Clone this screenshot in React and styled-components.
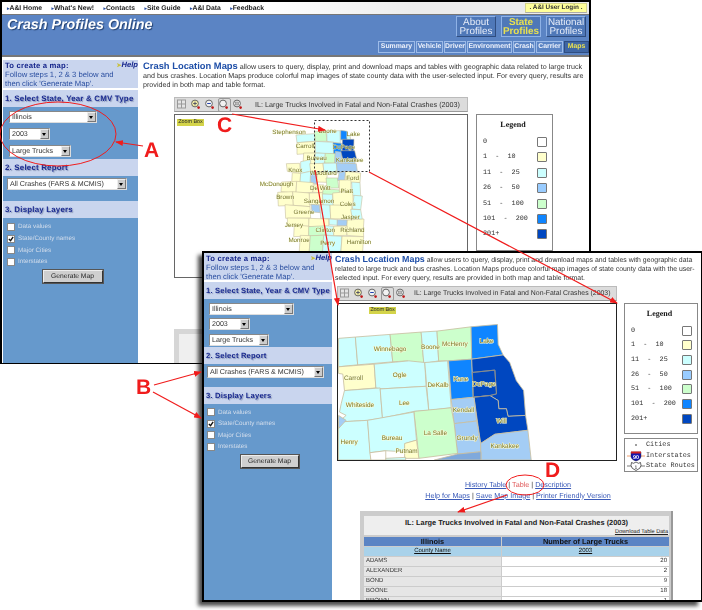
import React from "react";
import styled, { createGlobalStyle } from "styled-components";

const GlobalStyle = createGlobalStyle`
  html, body { margin: 0; padding: 0; background: #fff; }
  body {
    font-family: "Liberation Sans", Arial, sans-serif;
    overflow: hidden;
    text-rendering: geometricPrecision;
  }
`;

const NAV = ["A&I Home", "What's New!", "Contacts", "Site Guide", "A&I Data", "Feedback"];
const TABS = [
  ["Summary", 37],
  ["Vehicle", 27],
  ["Driver", 22],
  ["Environment", 45],
  ["Crash", 22],
  ["Carrier", 27],
  ["Maps", 25, true],
];
const LEGEND = [
  ["0", "#ffffff"],
  ["1  -  10", "#ffffcc"],
  ["11  -  25", "#ccffff"],
  ["26  -  50", "#99ccff"],
  ["51  -  100", "#ccffcc"],
  ["101  -  200", "#0f85ff"],
  ["201+", "#0047c0"],
];
const C = { y: "#ffffcc", c: "#ccffff", l: "#a4cdf5", g: "#ccffcc", b: "#0f85ff", d: "#0047c0", m: "#7fa9dc", w: "#ffffff" };

// counties of the state map, x y w h colour, in reference crop units
const STATE_CELLS = [
  [465, 118, 35, 32, "g"], [500, 116, 40, 34, "c"], [540, 114, 20, 28, "b"], [560, 130, 10, 12, "c"],
  [410, 125, 55, 25, "c"], [410, 150, 55, 35, "y"], [465, 150, 55, 35, "c"], [520, 152, 25, 33, "b"], [545, 142, 35, 43, "d"],
  [430, 185, 35, 30, "y"], [465, 185, 30, 30, "c"], [495, 185, 30, 30, "g"], [525, 178, 20, 37, "l"], [545, 175, 42, 22, "d"], [545, 197, 40, 18, "l"],
  [380, 215, 40, 25, "y"], [420, 205, 30, 35, "c"], [450, 215, 40, 25, "y"], [490, 215, 40, 25, "c"], [530, 215, 60, 25, "l"],
  [395, 240, 25, 30, "y"], [420, 240, 30, 30, "c"], [450, 240, 20, 35, "l"], [470, 240, 30, 30, "y"], [500, 258, 35, 32, "g"], [535, 240, 20, 25, "l"], [555, 240, 45, 30, "y"],
  [365, 270, 45, 30, "y"], [410, 270, 50, 30, "y"], [460, 275, 30, 25, "y"], [490, 290, 50, 18, "g"], [540, 265, 35, 35, "y"], [575, 270, 25, 40, "c"],
  [355, 300, 45, 40, "y"], [400, 300, 50, 40, "y"], [450, 300, 40, 35, "y"], [490, 308, 30, 32, "c"], [520, 300, 60, 40, "y"], [580, 310, 25, 40, "c"],
  [375, 340, 75, 40, "y"], [455, 335, 25, 25, "l"], [480, 340, 30, 40, "c"], [510, 340, 65, 40, "y"], [575, 350, 30, 30, "c"],
  [380, 380, 65, 20, "y"], [445, 380, 60, 22, "y"], [505, 380, 25, 20, "c"], [530, 380, 30, 22, "l"], [560, 380, 50, 30, "y"],
  [400, 400, 45, 30, "y"], [445, 402, 50, 28, "g"], [495, 402, 25, 28, "c"], [520, 402, 40, 28, "y"], [560, 410, 50, 20, "y"],
  [420, 430, 30, 60, "y"], [450, 430, 40, 60, "g"], [490, 430, 55, 60, "c"], [545, 430, 65, 60, "y"],
];
const STATE_LABELS = [
  ["Stephenson", 387, 124], ["Boone", 503, 121], ["Lake", 580, 132], ["Carroll", 435, 166], ["DuPage", 552, 171],
  ["Bureau", 470, 202], ["Kankakee", 569, 210], ["Knox", 406, 240], ["Woodford", 490, 249], ["Ford", 578, 262],
  ["McDonough", 350, 280], ["De Witt", 481, 293], ["Piatt", 560, 302], ["Brown", 375, 319], ["Sangamon", 477, 331],
  ["Coles", 563, 340], ["Greene", 432, 366], ["Jasper", 571, 379], ["Jersey", 402, 404], ["Clinton", 496, 418],
  ["Richland", 577, 418], ["Monroe", 417, 450], ["Perry", 503, 458], ["Hamilton", 597, 454],
];
// zoomed north-east counties, closed polygons in reference crop units
const ZOOM_COUNTIES = [
  ["22,172 73,168 80,252 22,258", "c"], ["73,168 178,160 186,243 80,252", "c"],
  ["178,160 272,153 280,248 235,252 232,240 186,243", "g"], ["272,153 320,150 325,240 280,248", "c"],
  ["320,150 423,137 425,235 355,240 325,240", "g"], ["423,137 503,130 505,190 520,222 425,235", "b"],
  ["355,240 425,235 430,350 363,357", "b"],
  ["425,235 520,222 540,245 560,300 582,330 588,405 535,408 530,385 507,385 505,360 480,345 430,350", "d"],
  ["427,275 495,268 500,340 480,345 430,350", "d"],
  ["432,350 480,345 505,360 507,385 530,385 535,408 588,405 595,450 495,462 452,490", "d"],
  ["363,357 432,350 440,422 372,430", "l"], ["372,430 440,422 452,490 453,515 382,522", "l"],
  ["495,462 595,450 605,540 453,540 452,490", "l"],
  ["22,258 130,250 135,322 40,330 35,280 22,278", "y"],
  ["130,250 235,240 283,245 287,317 148,325 135,322", "c"], ["283,245 352,240 363,382 295,390", "c"],
  ["40,330 148,322 155,413 110,420 22,425 45,405 25,395 30,370", "c"], ["148,325 287,317 295,390 250,393 155,413", "c"],
  ["250,393 363,382 372,430 382,520 265,535 260,480", "g"],
  ["22,425 110,420 120,540 22,540", "c"], ["110,420 250,395 258,480 225,490 222,515 165,512 117,518", "c"],
  ["222,490 258,480 265,535 222,535", "y"], ["117,518 165,512 165,540 120,540", "w"],
  ["165,535 225,532 225,540 165,540", "c"], ["312,540 382,522 453,515 453,540", "m"], ["22,405 45,420 22,445", "l"],
];
const ZOOM_LABELS = [
  ["Winnebago", 178, 211], ["Boone", 300, 203], ["McHenry", 374, 196], ["Lake", 470, 185], ["Carroll", 67, 297],
  ["Ogle", 207, 290], ["DeKalb", 323, 320], ["Kane", 392, 300], ["DuPage", 462, 315], ["Whiteside", 87, 380],
  ["Lee", 221, 374], ["Kendall", 400, 395], ["Will", 515, 428], ["Grundy", 411, 478], ["La Salle", 315, 465],
  ["Henry", 54, 491], ["Bureau", 184, 479], ["Putnam", 228, 519], ["Kankakee", 525, 504],
];
const ROWS = [["ADAMS", 20], ["ALEXANDER", 2], ["BOND", 9], ["BOONE", 18], ["BROWN", 1]];

// nudges a corner a little so the state's counties are not a perfect grid
const nudge = (x, y) => `${x + ((x * 7 + y * 13) % 7) - 3},${y + ((x * 11 + y * 3) % 7) - 3}`;

const Page = styled.div`
  position: relative;
  width: 702px;
  height: 610px;
  overflow: hidden;
  background: #fff;
`;
const BackWindow = styled.div`
  position: absolute;
  left: 0;
  top: 0;
  width: 591px;
  height: 364px;
  box-sizing: border-box;
  border: 2px solid #000;
  border-bottom-width: 1px;
  background: #fff;
  display: flex;
  flex-direction: column;
  overflow: hidden;
  filter: blur(0.25px);
`;
const FrontWindow = styled.div`
  position: absolute;
  left: 202px;
  top: 251px;
  width: 500px;
  height: 351px;
  box-sizing: border-box;
  border: 1px solid #000;
  border-width: 2px 1px 2px 2px;
  background: #fff;
  display: flex;
  box-shadow: -4px 4px 4px rgba(0, 0, 0, 0.7);
`;
const FrontInner = styled.div`
  flex: 1;
  display: flex;
  min-width: 0;
  overflow: hidden;
  filter: blur(0.25px);
`;
const NavBar = styled.div`
  height: 12px;
  flex: none;
  display: flex;
  align-items: center;
  justify-content: space-between;
  padding-left: 5px;
  background: linear-gradient(to right, #fff 45%, #ececec 70%);
`;
const NavList = styled.div`
  display: flex;
  gap: 9.4px;
`;
const NavLink = styled.span`
  font-size: 6.8px;
  font-weight: bold;
  color: #222;
  white-space: nowrap;
  &::before {
    content: "▸";
    font-size: 5px;
    color: #2b4fa0;
  }
`;
const LoginTab = styled.div`
  width: 62px;
  height: 10px;
  margin-right: 2px;
  background: #ffff99;
  border: 1px solid #d4d48a;
  border-bottom-color: #aaa;
  box-sizing: border-box;
  font-size: 6.4px;
  font-weight: bold;
  line-height: 8px;
  text-align: center;
  color: #333;
`;
const Banner = styled.div`
  height: 43px;
  flex: none;
  background: #5b84c4;
  border-bottom: 2px solid #777;
  display: flex;
  justify-content: space-between;
  padding-left: 5px;
  box-sizing: border-box;
  border-top: 1px solid #777;
`;
const SiteTitle = styled.div`
  font-size: 14.3px;
  font-weight: bold;
  font-style: italic;
  color: #fff;
  margin-top: 2px;
  text-shadow: 1px 1px 1px #24406e;
`;
const BannerRight = styled.div`
  display: flex;
  flex-direction: column;
  align-items: flex-end;
`;
const BigTabs = styled.div`
  display: flex;
  gap: 5px;
  margin: 1px 3px 0 0;
`;
const BigTab = styled.div`
  width: 40px;
  height: 21px;
  box-sizing: border-box;
  border: 1px solid ${(p) => (p.$active ? "#8fb2e6" : "#2f4d80")};
  border-top-color: #8fb2e6;
  border-left-color: #8fb2e6;
  background: #4f78b8;
  color: ${(p) => (p.$active ? "#e8e050" : "#e6ecf8")};
  font-size: 9.9px;
  font-weight: ${(p) => (p.$active ? "bold" : "normal")};
  line-height: 9.5px;
  padding-top: 0.5px;
  text-align: center;
`;
const SmallTabs = styled.div`
  display: flex;
  gap: 1px;
  margin-top: 4px;
  align-items: flex-start;
`;
const SmallTab = styled.div`
  width: ${(p) => p.$width}px;
  height: 12px;
  box-sizing: border-box;
  border: 1px solid ${(p) => (p.$active ? "#2f4d80" : "#9dbbe8")};
  background: ${(p) => (p.$active ? "#3f66a4" : "#5b84c4")};
  color: ${(p) => (p.$active ? "#e8e050" : "#eef2fb")};
  font-size: 6.9px;
  font-weight: bold;
  line-height: 10px;
  text-align: center;
  white-space: nowrap;
`;
const Body = styled.div`
  flex: 1;
  display: flex;
  min-height: 0;
`;
const Side = styled.div`
  flex: none;
  width: ${(p) => p.$width}px;
  margin-left: ${(p) => p.$inset}px;
  display: flex;
  flex-direction: column;
`;
const Intro = styled.div`
  flex: none;
  height: ${(p) => p.$height}px;
  margin: ${(p) => p.$top}px 0 2px;
  background: #c9d5ee;
  padding: 1px 0 0 2px;
  box-sizing: border-box;
  position: relative;
  font-size: 7.7px;
  line-height: 9.2px;
  color: #2b4fa0;
`;
const IntroHead = styled.div`
  font-weight: bold;
  color: #16268c;
  letter-spacing: 0.2px;
`;
const HelpLink = styled.span`
  position: absolute;
  right: 0;
  top: 0;
  font-size: 7.6px;
  font-style: italic;
  font-weight: bold;
  color: #16268c;
  &::before {
    content: "➤";
    font-style: normal;
    font-size: 6px;
    color: #c8c040;
  }
`;
const StepHead = styled.div`
  flex: none;
  height: 17px;
  background: #c9d5ee;
  font-size: ${(p) => p.$size}px;
  font-weight: bold;
  letter-spacing: 0.2px;
  line-height: 17px;
  color: #1a2a90;
  padding-left: 2px;
  text-shadow: 1px 1px 1px #8a97b8;
  white-space: nowrap;
`;
const Panel = styled.div`
  flex: ${(p) => (p.$height ? "none" : "1")};
  height: ${(p) => (p.$height ? `${p.$height}px` : "auto")};
  box-sizing: border-box;
  background: #6699cc;
  padding: ${(p) => p.$padding};
  display: flex;
  flex-direction: column;
  align-items: flex-start;
  gap: ${(p) => p.$gap || 0}px;
`;
const SelectBox = styled.div`
  width: ${(p) => p.$width}px;
  height: 12px;
  flex: none;
  box-sizing: border-box;
  background: #fff;
  border: 1px solid #888;
  border-right-color: #ddd;
  border-bottom-color: #ddd;
  display: flex;
  justify-content: space-between;
  align-items: center;
  padding-left: 2px;
  font-size: 7.1px;
  color: #333;
  white-space: nowrap;
`;
const SelectArrow = styled.span`
  width: 9px;
  height: 10px;
  flex: none;
  background: #ccc;
  border: 1px solid #777;
  border-top-color: #eee;
  border-left-color: #eee;
  box-sizing: border-box;
  position: relative;
  &::after {
    content: "";
    position: absolute;
    left: 1px;
    top: 3px;
    border: 2.5px solid transparent;
    border-top: 3px solid #000;
    border-bottom: 0;
  }
`;
const CheckRow = styled.div`
  height: ${(p) => p.$height}px;
  display: flex;
  align-items: center;
  gap: 3px;
  font-size: 6.3px;
  color: #d4deec;
  white-space: nowrap;
`;
const CheckMark = styled.span`
  width: 8px;
  height: 8px;
  box-sizing: border-box;
  flex: none;
  background: #fff;
  border: 1px solid #888;
  display: flex;
`;
const GenerateButton = styled.div`
  width: ${(p) => p.$width}px;
  height: 13px;
  align-self: center;
  margin-top: 2px;
  box-sizing: border-box;
  background: #cfcfcf;
  border: 1px solid #333;
  border-top-color: #eee;
  border-left-color: #eee;
  outline: 1px solid #555;
  font-size: 6.7px;
  line-height: 11px;
  text-align: center;
  color: #222;
`;
const Main = styled.div`
  flex: 1;
  min-width: 0;
  padding: ${(p) => p.$padding};
  display: flex;
  flex-direction: column;
`;
const Lede = styled.p`
  margin: 0;
  font-size: ${(p) => p.$size}px;
  line-height: 9.1px;
  color: #333;
  white-space: pre;
`;
const LedeTitle = styled.b`
  font-size: ${(p) => p.$size}px;
  color: #1f4fa8;
  font-weight: bold;
`;
const MapBlock = styled.div`
  display: flex;
  align-items: flex-start;
  gap: ${(p) => p.$gap}px;
  margin: ${(p) => p.$top}px 0 0 ${(p) => p.$indent}px;
`;
const MapColumn = styled.div`
  width: ${(p) => p.$width}px;
  flex: none;
`;
const ToolBar = styled.div`
  height: 15px;
  box-sizing: border-box;
  background: #dcdcdc;
  border: 1px solid #bbb;
  border-bottom-color: #999;
  display: flex;
  align-items: center;
  gap: 3px;
  padding-left: 2px;
`;
const ToolCaption = styled.span`
  font-size: ${(p) => p.$size}px;
  color: #333;
  white-space: nowrap;
  margin-left: ${(p) => p.$gap}px;
`;
const ToolSlot = styled.span`
  width: 11px;
  height: 12px;
  display: flex;
  border: 1px solid ${(p) => (p.$pressed ? "#999" : "transparent")};
  border-radius: 2px;
  box-sizing: content-box;
  margin: 0 -1px;
`;
const MapFrame = styled.div`
  position: relative;
  margin-top: 2px;
  height: ${(p) => p.$height}px;
  box-sizing: border-box;
  border: 1px solid ${(p) => (p.$strong ? "#222" : "#666")};
  background: #fff;
  overflow: hidden;
  svg { display: block; }
`;
const ZoomBadge = styled.span`
  position: absolute;
  left: ${(p) => p.$left}px;
  top: ${(p) => p.$top}px;
  width: 27px;
  height: 7px;
  background: #d4d44a;
  font-size: 5.4px;
  line-height: 7px;
  text-align: center;
  color: #222;
`;
const LegendBox = styled.div`
  flex: none;
  box-sizing: border-box;
  width: ${(p) => p.$width}px;
  height: ${(p) => p.$height}px;
  margin-top: ${(p) => p.$top}px;
  border: 1px solid #888;
  padding: 5px 5px 0 6px;
  background: #fff;
`;
const LegendTitle = styled.div`
  font-family: "Liberation Serif", serif;
  font-size: 8px;
  font-weight: bold;
  text-align: center;
  color: #111;
  margin-bottom: 5px;
  padding-right: 4px;
`;
const LegendRow = styled.div`
  height: ${(p) => p.$height}px;
  display: flex;
  justify-content: space-between;
  align-items: center;
  font-family: "Liberation Mono", monospace;
  font-size: 6.8px;
  color: #333;
  white-space: pre;
`;
const Swatch = styled.span`
  width: 10px;
  height: 10px;
  box-sizing: border-box;
  background: ${(p) => p.$color};
  border: 1px solid #777;
  border-radius: 1px;
`;
const LegendStack = styled.div`
  display: flex;
  flex-direction: column;
  gap: 4px;
`;
const KeyBox = styled.div`
  width: 74px;
  height: 34px;
  box-sizing: border-box;
  border: 1px solid #888;
  padding-top: 1px;
  display: flex;
  flex-direction: column;
`;
const KeyRow = styled.div`
  flex: 1;
  display: flex;
  align-items: center;
  font-family: "Liberation Mono", monospace;
  font-size: 6.8px;
  color: #333;
  white-space: nowrap;
`;
const KeyIcon = styled.span`
  width: 21px;
  flex: none;
  display: flex;
  justify-content: center;
`;
const LinkLines = styled.div`
  margin-top: 8px;
  text-align: center;
  font-size: 7.2px;
  line-height: 10.5px;
  color: #333;
  white-space: nowrap;
`;
const PlainLink = styled.span`
  color: ${(p) => (p.$current ? "#e05a5a" : "#3a5ab8")};
  text-decoration: ${(p) => (p.$current ? "none" : "underline")};
`;
const DataTable = styled.div`
  width: 313px;
  margin: 10px 0 0 25px;
  background: #ccc;
  border-right: 2px solid #999;
  padding: 5px 2px 0 4px;
  box-sizing: border-box;
  display: flex;
  flex-direction: column;
  gap: 1px;
`;
const TableTitle = styled.div`
  height: 19px;
  background: #eee;
  font-size: 7.4px;
  font-weight: bold;
  color: #222;
  text-align: center;
  position: relative;
  padding-top: 2px;
  box-sizing: border-box;
  margin-bottom: 1px;
`;
const DownloadLink = styled.span`
  position: absolute;
  right: 1px;
  bottom: 0;
  font-size: 5.6px;
  font-weight: normal;
  text-decoration: underline;
`;
const TableRow = styled.div`
  display: grid;
  grid-template-columns: 137px 1fr;
  gap: 1px;
`;
const TableCell = styled.div`
  height: 9px;
  font-size: ${(p) => (p.$kind === "head" ? 7.4 : 6)}px;
  line-height: 9px;
  padding: 0 2px;
  color: ${(p) => (p.$kind === "body" ? "#333" : "#111")};
  font-weight: ${(p) => (p.$kind === "head" ? "bold" : "normal")};
  text-decoration: ${(p) => (p.$kind === "sub" ? "underline" : "none")};
  text-align: ${(p) => p.$align || "center"};
  background: ${(p) => {
    if (p.$kind === "head") return "#5b84c4";
    if (p.$kind === "sub") return "#a9d2ea";
    return p.$white ? "#fff" : "#e6e6e6";
  }};
`;
const UnderTable = styled.div`
  margin: 51px 0 0 31px;
  height: 40px;
  width: 300px;
  flex: none;
  padding: 5px 0 0 5px;
  background: #d6d6d6;
  box-sizing: border-box;
`;
const UnderTitle = styled.div`
  height: 30px;
  background: #efefef;
`;
const Annotations = styled.svg`
  position: absolute;
  left: 0;
  top: 0;
  pointer-events: none;
`;
const AnnotationLetter = styled.text`
  font-family: "Liberation Sans", Arial, sans-serif;
  font-size: 21px;
  font-weight: bold;
  fill: #f01c1c;
`;

function ToolIcon({ kind }) {
  if (kind === "grid") {
    return (
      <svg width="9" height="10" viewBox="0 0 9 10">
        <rect x="0.5" y="1" width="8" height="8" fill="#e4e4e4" stroke="#999" />
        <path d="M4.5 1v8M.5 5h8" stroke="#999" fill="none" />
      </svg>
    );
  }
  return (
    <svg width="9" height="10" viewBox="0 0 9 10">
      <circle cx="4" cy="4.5" r="3.4" fill={kind === "in" ? "#f4f0a8" : "#f2f2f2"} stroke="#666" />
      {kind === "in" && <path d="M2.2 4.5h3.6M4 2.7v3.6" stroke="#556" />}
      {kind === "out" && <path d="M2.2 4.5h3.6" stroke="#2040b0" />}
      {kind === "pan" && <rect x="2.5" y="3" width="3" height="3" fill="#bbb" stroke="#777" strokeWidth="0.5" />}
      <circle cx="7.6" cy="8.6" r="1.3" fill="#c01818" />
    </svg>
  );
}

function Tools() {
  return (
    <>
      <ToolSlot><ToolIcon kind="grid" /></ToolSlot>
      <ToolSlot><ToolIcon kind="in" /></ToolSlot>
      <ToolSlot><ToolIcon kind="out" /></ToolSlot>
      <ToolSlot $pressed><ToolIcon kind="box" /></ToolSlot>
      <ToolSlot><ToolIcon kind="pan" /></ToolSlot>
    </>
  );
}

function Sidebar({ width, inset, introHeight, introTop, panels, gap, rowHeight, selects, report, button, headSize }) {
  return (
    <Side $width={width} $inset={inset}>
      <Intro $height={introHeight} $top={introTop}>
        <IntroHead>To create a map:</IntroHead>
        <HelpLink>Help</HelpLink>
        Follow steps 1, 2 &amp; 3 below and
        <br />
        then click 'Generate Map'.
      </Intro>
      <StepHead $size={headSize}>1. Select State, Year &amp; CMV Type</StepHead>
      <Panel $height={panels[0]} $padding={`3.5px 0 0 ${inset + 5}px`} $gap={gap}>
        <SelectBox $width={selects[0]}>Illinois<SelectArrow /></SelectBox>
        <SelectBox $width={selects[1]}>2003<SelectArrow /></SelectBox>
        <SelectBox $width={selects[2]}>Large Trucks<SelectArrow /></SelectBox>
      </Panel>
      <StepHead $size={headSize}>2. Select Report</StepHead>
      <Panel $height={panels[1]} $padding={`2px 0 0 ${inset + 3}px`}>
        <SelectBox $width={report}>All Crashes (FARS &amp; MCMIS)<SelectArrow /></SelectBox>
      </Panel>
      <StepHead $size={headSize}>3. Display Layers</StepHead>
      <Panel $padding={`3px 0 0 ${inset + 3}px`}>
        {["Data values", "State/County names", "Major Cities", "Interstates"].map((name, i) => (
          <CheckRow key={name} $height={rowHeight}>
            <CheckMark>
              {i === 1 && (
                <svg width="6" height="6" viewBox="0 0 7 7">
                  <path d="M1 3.5l2 2 3-4.5" fill="none" stroke="#111" strokeWidth="1.6" />
                </svg>
              )}
            </CheckMark>
            {name}
          </CheckRow>
        ))}
        <GenerateButton $width={button}>Generate Map</GenerateButton>
      </Panel>
    </Side>
  );
}

function Legend({ width, height, top, rowHeight }) {
  return (
    <LegendBox $width={width} $height={height} $top={top}>
      <LegendTitle>Legend</LegendTitle>
      {LEGEND.map(([label, color]) => (
        <LegendRow key={label} $height={rowHeight}>
          {label}
          <Swatch $color={color} />
        </LegendRow>
      ))}
    </LegendBox>
  );
}

function StateMap() {
  return (
    <svg width="294" height="164" viewBox="45 68 882 492">
      {STATE_CELLS.map(([x, y, w, h, c], i) => (
        <polygon
          key={i}
          points={[nudge(x, y), nudge(x + w, y), nudge(x + w, y + h), nudge(x, y + h)].join(" ")}
          fill={C[c]}
          stroke="#c8c0a0"
          strokeWidth="1.8"
        />
      ))}
      {STATE_LABELS.map(([name, x, y]) => (
        <text
          key={name}
          x={x}
          y={y}
          textAnchor="middle"
          fontSize="18.8"
          fontFamily="Liberation Sans, Arial, sans-serif"
          fill="#77772a"
          stroke="#fbfbd8"
          strokeWidth="1.4"
          paintOrder="stroke"
        >
          {name}
        </text>
      ))}
    </svg>
  );
}

function RegionMap() {
  return (
    <svg width="278" height="156" viewBox="22 68 838 472">
      {ZOOM_COUNTIES.map(([points, c], i) => (
        <polygon key={i} points={points} fill={C[c]} stroke="#c8bfa0" strokeWidth="2.5" />
      ))}
      <polygon points="427,275 495,268 500,340 480,345 430,350" fill="none" stroke="#7b7b78" strokeWidth="2" />
      {ZOOM_LABELS.map(([name, x, y]) => (
        <text
          key={name}
          x={x}
          y={y}
          textAnchor="middle"
          fontSize="19.5"
          fontFamily="Liberation Sans, Arial, sans-serif"
          fill="#77772a"
          stroke="#fbfbd8"
          strokeWidth="3"
          paintOrder="stroke"
        >
          {name}
        </text>
      ))}
    </svg>
  );
}

function Arrow({ d }) {
  return <path d={d} fill="none" stroke="#f01c1c" strokeWidth="1.2" markerEnd="url(#head)" />;
}

export default function App() {
  return (
    <Page>
      <GlobalStyle />
      <BackWindow>
        <NavBar>
          <NavList>
            {NAV.map((label) => (
              <NavLink key={label}>{label}</NavLink>
            ))}
          </NavList>
          <LoginTab>. A&amp;I User Login .</LoginTab>
        </NavBar>
        <Banner>
          <SiteTitle>Crash Profiles Online</SiteTitle>
          <BannerRight>
            <BigTabs>
              <BigTab>About Profiles</BigTab>
              <BigTab $active>State Profiles</BigTab>
              <BigTab>National Profiles</BigTab>
            </BigTabs>
            <SmallTabs>
              {TABS.map(([label, w, active]) => (
                <SmallTab key={label} $width={w} $active={active}>{label}</SmallTab>
              ))}
            </SmallTabs>
          </BannerRight>
        </Banner>
        <Body>
          <Sidebar
            width={135}
            inset={1}
            introHeight={28}
            introTop={3}
            panels={[52, 25]}
            gap={5}
            rowHeight={11.7}
            selects={[88, 41, 62]}
            report={120}
            button={60}
            headSize={7.9}
          />
          <Main $padding="4px 0 0 5px">
            <Lede $size={7.15}>
              <LedeTitle $size={9.4}>Crash Location Maps</LedeTitle>
              {" allow users to query, display, print and download maps and tables with geographic data related to large truck\n"}
              {"and bus crashes. Location Maps produce colorful map images of state county data with the user-selected input. For every query, results are\n"}
              {"provided in both map and table format."}
            </Lede>
            <MapBlock $top={7} $gap={8} $indent={31}>
              <MapColumn $width={294}>
                <ToolBar>
                  <Tools />
                  <ToolCaption $gap={8} $size={7.2}>IL: Large Trucks Involved in Fatal and Non-Fatal Crashes (2003)</ToolCaption>
                </ToolBar>
                <MapFrame $height={164}>
                  <StateMap />
                  <ZoomBadge $left={2} $top={4}>Zoom Box</ZoomBadge>
                </MapFrame>
              </MapColumn>
              <Legend width={77} height={137} top={17} rowHeight={15.4} />
            </MapBlock>
            <UnderTable>
              <UnderTitle />
            </UnderTable>
          </Main>
        </Body>
      </BackWindow>

      <FrontWindow>
        <FrontInner>
          <Sidebar
            width={128}
            inset={0}
            introHeight={27}
            introTop={0}
            panels={[48, 22.5]}
            gap={3.5}
            rowHeight={11.5}
            selects={[85, 41, 60]}
            report={117}
            button={58}
            headSize={7.6}
          />
          <Main $padding="2px 0 0 3px">
            <Lede $size={6.9}>
              <LedeTitle $size={8.9}>Crash Location Maps</LedeTitle>
              {" allow users to query, display, print and download maps and tables with geographic data\n"}
              {"related to large truck and bus crashes. Location Maps produce colorful map images of state county data with the user-\n"}
              {"selected input. For every query, results are provided in both map and table format."}
            </Lede>
            <MapBlock $top={3} $gap={7} $indent={2}>
              <MapColumn $width={280}>
                <ToolBar>
                  <Tools />
                  <ToolCaption $gap={4} $size={6.9}>IL: Large Trucks Involved in Fatal and Non-Fatal Crashes (2003)</ToolCaption>
                </ToolBar>
                <MapFrame $height={158} $strong>
                  <RegionMap />
                  <ZoomBadge $left={31} $top={3}>Zoom Box</ZoomBadge>
                </MapFrame>
              </MapColumn>
              <LegendStack>
                <Legend width={74} height={131} top={17} rowHeight={14.7} />
                <KeyBox>
                  <KeyRow>
                    <KeyIcon><svg width="12" height="6"><circle cx="6" cy="3" r="0.8" fill="#222" /></svg></KeyIcon>
                    Cities
                  </KeyRow>
                  <KeyRow>
                    <KeyIcon>
                      <svg width="18" height="10" viewBox="0 0 18 10">
                        <path d="M0 5h18" stroke="#f0a070" />
                        <path d="M4 1h10v5q-1 3-5 4q-4-1-5-4z" fill="#1414b0" stroke="#222" strokeWidth="0.4" />
                        <rect x="4" y="0.5" width="10" height="2" fill="#d02020" />
                        <text x="9" y="8" textAnchor="middle" fontSize="5.5" fontWeight="bold" fill="#fff" fontFamily="Liberation Sans, sans-serif">90</text>
                      </svg>
                    </KeyIcon>
                    Interstates
                  </KeyRow>
                  <KeyRow>
                    <KeyIcon>
                      <svg width="18" height="10" viewBox="0 0 18 10">
                        <path d="M0 5h18" stroke="#222" strokeWidth="0.6" />
                        <path d="M4.5 1.5l2 .8 2.5-1.3 2.5 1.3 2-.8.5 3q0 3-5 5q-5-2-5-5z" fill="#fff" stroke="#222" strokeWidth="0.7" />
                        <text x="9" y="7.5" textAnchor="middle" fontSize="5" fill="#111" fontFamily="Liberation Sans, sans-serif">1</text>
                      </svg>
                    </KeyIcon>
                    State Routes
                  </KeyRow>
                </KeyBox>
              </LegendStack>
            </MapBlock>
            <LinkLines>
              <PlainLink>History Table</PlainLink> | <PlainLink $current>Table</PlainLink> | <PlainLink>Description</PlainLink>
              <br />
              <PlainLink>Help for Maps</PlainLink> | <PlainLink>Save Map Image</PlainLink> | <PlainLink>Printer Friendly Version</PlainLink>
            </LinkLines>
            <DataTable>
              <TableTitle>
                IL: Large Trucks Involved in Fatal and Non-Fatal Crashes (2003)
                <DownloadLink>Download Table Data</DownloadLink>
              </TableTitle>
              <TableRow>
                <TableCell $kind="head">Illinois</TableCell>
                <TableCell $kind="head">Number of Large Trucks</TableCell>
              </TableRow>
              <TableRow>
                <TableCell $kind="sub">County Name</TableCell>
                <TableCell $kind="sub">2003</TableCell>
              </TableRow>
              {ROWS.map(([county, count]) => (
                <TableRow key={county}>
                  <TableCell $kind="body" $align="left">{county}</TableCell>
                  <TableCell $kind="body" $align="right" $white>{count}</TableCell>
                </TableRow>
              ))}
            </DataTable>
          </Main>
        </FrontInner>
      </FrontWindow>

      <Annotations width="702" height="610" viewBox="0 0 702 610">
        <defs>
          <marker id="head" markerWidth="8" markerHeight="6" refX="7" refY="3" orient="auto" markerUnits="userSpaceOnUse">
            <path d="M0 0L8 3L0 6z" fill="#f01c1c" />
          </marker>
        </defs>
        <ellipse cx="58" cy="134" rx="58" ry="32" fill="none" stroke="#f01c1c" />
        <Arrow d="M143 146L116 142" />
        <AnnotationLetter x="144" y="157">A</AnnotationLetter>
        <AnnotationLetter x="217" y="132">C</AnnotationLetter>
        <rect x="314.5" y="120.5" width="55" height="51" fill="none" stroke="#333" strokeDasharray="2 2" />
        <Arrow d="M232 114L325 130" />
        <Arrow d="M369 172L617 303" />
        <Arrow d="M315 170L338 305" />
        <AnnotationLetter x="136" y="394">B</AnnotationLetter>
        <Arrow d="M154 385L201 372" />
        <Arrow d="M153 392L201 418" />
        <AnnotationLetter x="545" y="477">D</AnnotationLetter>
        <ellipse cx="525" cy="485" rx="19" ry="10" fill="none" stroke="#f01c1c" />
        <Arrow d="M507 495L458 512" />
      </Annotations>
    </Page>
  );
}
